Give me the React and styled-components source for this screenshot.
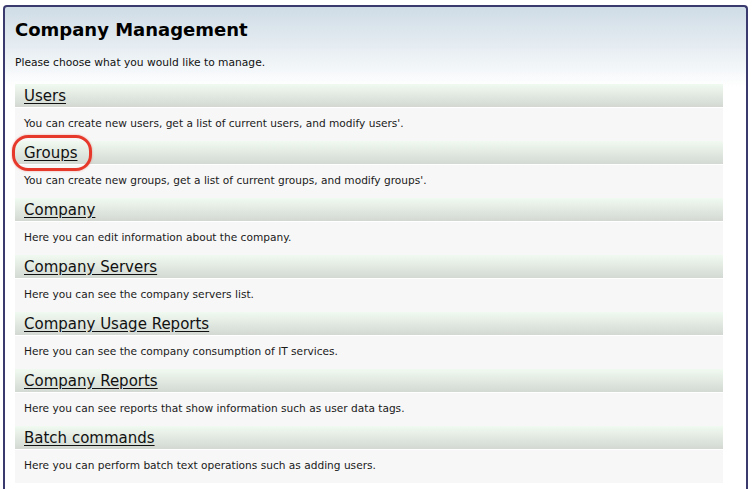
import React from "react";
import styled, { createGlobalStyle } from "styled-components";

const GlobalStyle = createGlobalStyle`
  html, body {
    margin: 0;
    padding: 0;
    background: #fff;
  }
  body {
    font-family: "DejaVu Sans", Verdana, sans-serif;
    color: #111;
  }
`;

const Page = styled.div`
  padding: 5px 4px 0 3px;
  height: 489px;
  box-sizing: border-box;
  overflow: hidden;
`;

const Panel = styled.div`
  border: 2px solid #3a3a6e;
  border-bottom: none;
  border-radius: 4px 4px 0 0;
  background: linear-gradient(to bottom, #cfdce6 0px, #e6edf2 40px, #ffffff 80px);
  padding: 12px 23px 30px 10px;
  min-height: 500px;
`;

const Title = styled.h1`
  margin: 0;
  font-size: 18px;
  font-weight: bold;
  line-height: 22px;
  color: #000;
`;

const Intro = styled.p`
  margin: 15px 0 0;
  font-size: 10.7px;
  line-height: 14px;
  color: #111;
`;

const List = styled.div`
  margin-top: 14px;
  display: flex;
  flex-direction: column;
`;

const Item = styled.div`
  display: flex;
  flex-direction: column;
`;

const ItemHead = styled.div`
  height: 23px;
  display: flex;
  align-items: center;
  padding-left: 9px;
  background: linear-gradient(to bottom, #f1faf1 0%, #e3ebe3 45%, #d3d8d3 100%);
  margin-bottom: 1px;
`;

const ItemLink = styled.a`
  position: relative;
  font-size: 15px;
  line-height: 18px;
  color: #111;
  text-decoration: underline;
  text-underline-offset: 2px;
  cursor: pointer;

  ${({ $marked }) =>
    $marked &&
    `
    &::after {
      content: "";
      position: absolute;
      left: -12px;
      right: -15px;
      top: -9px;
      bottom: -9px;
      border: 3.5px solid #e6382b;
      border-radius: 16px;
      box-shadow: 0 0 2px rgba(230, 56, 43, 0.5);
    }
  `}
`;

const ItemText = styled.div`
  height: 33px;
  box-sizing: border-box;
  padding: 0 0 3px 9px;
  display: flex;
  align-items: center;
  background: #f7f7f7;
  font-size: 10.6px;
  color: #1a1a1a;
`;

const sections = [
  {
    name: "Users",
    text: "You can create new users, get a list of current users, and modify users'.",
  },
  {
    name: "Groups",
    text: "You can create new groups, get a list of current groups, and modify groups'.",
    marked: true,
  },
  { name: "Company", text: "Here you can edit information about the company." },
  { name: "Company Servers", text: "Here you can see the company servers list." },
  {
    name: "Company Usage Reports",
    text: "Here you can see the company consumption of IT services.",
  },
  {
    name: "Company Reports",
    text: "Here you can see reports that show information such as user data tags.",
  },
  {
    name: "Batch commands",
    text: "Here you can perform batch text operations such as adding users.",
  },
];

const App = () => {
  return (
    <Page>
      <GlobalStyle />
      <Panel>
        <Title>Company Management</Title>
        <Intro>Please choose what you would like to manage.</Intro>
        <List>
          {sections.map((s) => (
            <Item key={s.name}>
              <ItemHead>
                <ItemLink $marked={s.marked}>{s.name}</ItemLink>
              </ItemHead>
              <ItemText>{s.text}</ItemText>
            </Item>
          ))}
        </List>
      </Panel>
    </Page>
  );
};

export default App;
